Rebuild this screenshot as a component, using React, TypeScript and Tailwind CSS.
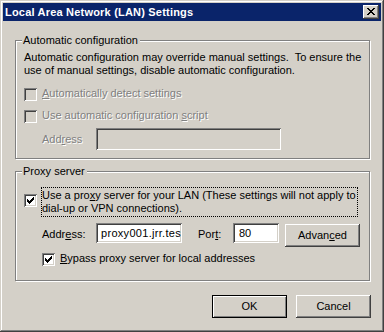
import React from "react";

const sunken =
  "shadow-[inset_1px_1px_0_#808080,inset_-1px_-1px_0_#ffffff,inset_2px_2px_0_#404040,inset_-2px_-2px_0_#d4d0c8]";
const raised =
  "shadow-[inset_-1px_-1px_0_#404040,inset_1px_1px_0_#ffffff,inset_-2px_-2px_0_#808080]";
const disabledText = "text-[#808080] [text-shadow:1px_1px_0_#ffffff]";

function CheckMark() {
  return (
    <svg width="7" height="7" viewBox="0 0 7 7" shapeRendering="crispEdges">
      <path
        fill="#000"
        d="M6 0h1v1H6z M5 1h2v1H5z M0 2h1v1H0z M4 2h3v1H4z M0 3h2v1H0z M3 3h3v1H3z M0 4h5v1H0z M1 5h3v1H1z M2 6h1v1H2z"
      />
    </svg>
  );
}

function CloseX() {
  return (
    <svg width="8" height="7" viewBox="0 0 8 7" shapeRendering="crispEdges">
      <path
        fill="#000"
        d="M0 0h2v1H0z M6 0h2v1H6z M1 1h2v1H1z M5 1h2v1H5z M2 2h4v1H2z M3 3h2v1H3z M2 4h4v1H2z M1 5h2v1H1z M5 5h2v1H5z M0 6h2v1H0z M6 6h2v1H6z"
      />
    </svg>
  );
}

function CheckBox({ checked, disabled }: { checked?: boolean; disabled?: boolean }) {
  return (
    <div
      className={
        "w-[13px] h-[13px] shrink-0 flex items-center justify-center " +
        sunken +
        (disabled ? " bg-[#d4d0c8]" : " bg-white")
      }
    >
      {checked ? <CheckMark /> : null}
    </div>
  );
}

function Group({
  legend,
  heightClass,
  children,
}: {
  legend: string;
  heightClass: string;
  children: React.ReactNode;
}) {
  return (
    <div
      className={
        "relative w-[355px] border border-[#808080] shadow-[inset_1px_1px_0_#ffffff,1px_1px_0_#ffffff] " +
        heightClass
      }
    >
      <span className="absolute left-[6px] top-[-7px] bg-[#d4d0c8] pl-[1px] pr-[2px] leading-[13px] whitespace-nowrap">
        {legend}
      </span>
      {children}
    </div>
  );
}

export default function App() {
  return (
    <div className="w-[384px] h-[332px] bg-[#d4d0c8] p-[3px] shadow-[inset_-1px_-1px_0_#404040,inset_1px_1px_0_#d4d0c8,inset_-2px_-2px_0_#808080,inset_2px_2px_0_#ffffff] font-['Liberation_Sans',Arial,sans-serif] text-[11px] leading-[13px] text-black select-none">
      {/* Title bar */}
      <div className="h-[18px] bg-[#0a246a] flex items-center justify-between pl-[2px] pr-[2px]">
        <span className="text-white font-bold text-[11px] leading-[13px] tracking-[0.2px] whitespace-nowrap">
          Local Area Network (LAN) Settings
        </span>
        <div className={"w-[16px] h-[14px] bg-[#d4d0c8] flex justify-center pt-[3px] " + raised}>
          <CloseX />
        </div>
      </div>

      {/* Client */}
      <div className="flex flex-col pl-[12px] pt-[19px]">
        <Group legend="Automatic configuration" heightClass="h-[119px]">
          <div className="flex flex-col pl-[8px] pt-[10px]">
            <p className="whitespace-pre leading-[13px]">
              {"Automatic configuration may override manual settings.  To ensure the"}
              <br />
              {"use of manual settings, disable automatic configuration."}
            </p>
            <div className="flex items-start mt-[11px] h-[13px]">
              <CheckBox disabled />
              <span className={"ml-[5px] mt-[-1px] whitespace-nowrap " + disabledText}>
                <span className="underline">A</span>utomatically detect settings
              </span>
            </div>
            <div className="flex items-start mt-[9px] h-[13px]">
              <CheckBox disabled />
              <span className={"ml-[5px] mt-[-1px] whitespace-nowrap " + disabledText}>
                Use automatic configuration <span className="underline">s</span>cript
              </span>
            </div>
            <div className="flex items-center mt-[5px]">
              <span className={"ml-[18px] w-[54px] whitespace-nowrap " + disabledText}>
                Add<span className="underline">r</span>ess
              </span>
              <div className={"w-[185px] h-[22px] bg-[#d4d0c8] " + sunken} />
            </div>
          </div>
        </Group>

        <div className="mt-[12px]">
          <Group legend="Proxy server" heightClass="h-[110px]">
            <div className="flex flex-col pl-[8px] pt-[15px]">
              <div className="flex items-start">
                <div className="mt-[7px]">
                  <CheckBox checked />
                </div>
                <div className="ml-[4px] w-[317px] border border-dotted border-black pt-[1px] pb-[1px] whitespace-nowrap">
                  Use a pro<span className="underline">x</span>y server for your LAN (These settings will not apply to
                  <br />
                  dial-up or VPN connections).
                </div>
              </div>
              <div className="flex items-start mt-[6px] h-[24px]">
                <span className="ml-[18px] w-[54px] mt-[5px] whitespace-nowrap">
                  Addr<span className="underline">e</span>ss:
                </span>
                <div className={"w-[86px] h-[20px] bg-white overflow-hidden pl-[5px] pt-[4px] whitespace-nowrap tracking-[0.3px] " + sunken}>
                  proxy001.jrr.tes
                </div>
                <span className="ml-[16px] w-[35px] mt-[5px] whitespace-nowrap">
                  Por<span className="underline">t</span>:
                </span>
                <div className={"w-[46px] h-[20px] bg-white pl-[6px] pt-[4px] " + sunken}>80</div>
                <div
                  className={
                    "ml-[6px] mt-[1px] w-[75px] h-[23px] bg-[#d4d0c8] flex items-center justify-center whitespace-nowrap " +
                    raised
                  }
                >
                  Advan<span className="underline">c</span>ed
                </div>
              </div>
              <div className="flex items-start mt-[6px] ml-[18px] h-[13px]">
                <CheckBox checked />
                <span className="ml-[5px] mt-[-1px] whitespace-nowrap">
                  <span className="underline">B</span>ypass proxy server for local addresses
                </span>
              </div>
            </div>
          </Group>
        </div>

        <div className="w-[356px] flex justify-end gap-[9px] mt-[14px]">
          <div className="w-[75px] h-[23px] border border-black bg-[#d4d0c8] shadow-[inset_1px_1px_0_#ffffff,inset_-1px_-1px_0_#808080] flex items-center justify-center">
            OK
          </div>
          <div className={"w-[75px] h-[23px] bg-[#d4d0c8] flex items-center justify-center " + raised}>
            Cancel
          </div>
        </div>
      </div>
    </div>
  );
}
